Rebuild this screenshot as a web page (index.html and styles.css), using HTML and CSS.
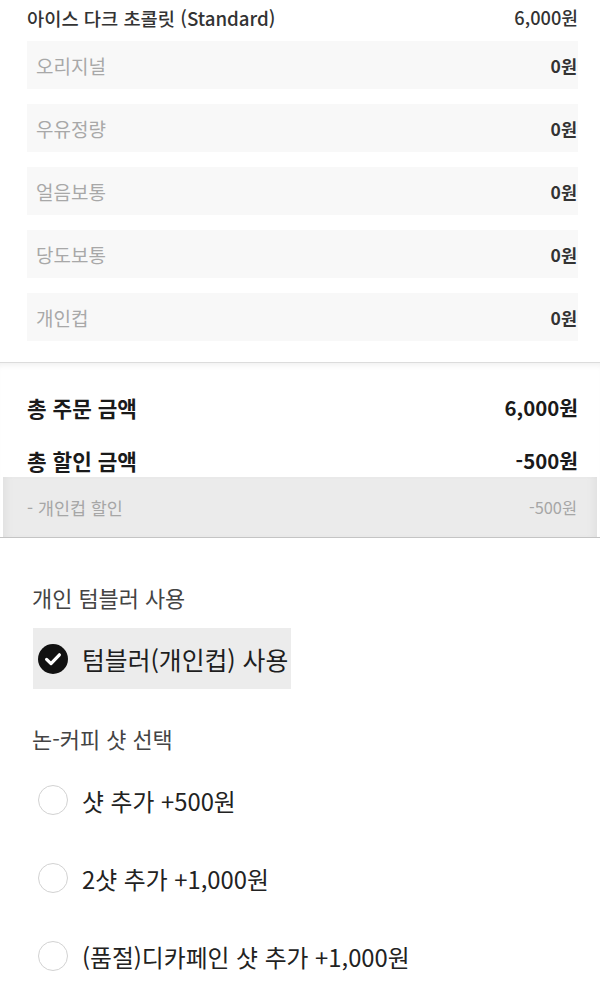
FILE: index.html
```html
<!DOCTYPE html>
<html lang="ko">
<head>
<meta charset="utf-8">
<link rel="stylesheet" href="styles.css">
</head>
<body>
<div class="items">
  <div class="item-head">
    <span>아이스 다크 초콜릿 (Standard)</span>
    <span class="head-price">6,000원</span>
  </div>
  <div class="opt"><span class="opt-name">오리지널</span><span class="opt-price">0원</span></div>
  <div class="opt"><span class="opt-name">우유정량</span><span class="opt-price">0원</span></div>
  <div class="opt"><span class="opt-name">얼음보통</span><span class="opt-price">0원</span></div>
  <div class="opt"><span class="opt-name">당도보통</span><span class="opt-price">0원</span></div>
  <div class="opt"><span class="opt-name">개인컵</span><span class="opt-price">0원</span></div>
</div>
<div class="totals">
  <div class="total-row"><span>총 주문 금액</span><span class="total-price">6,000원</span></div>
  <div class="total-row"><span>총 할인 금액</span><span class="total-price">-500원</span></div>
  <div class="discount"><span class="disc-name">- 개인컵 할인</span><span class="disc-price">-500원</span></div>
</div>
<div class="choices">
  <div class="group-title">개인 텀블러 사용</div>
  <div class="check-box">
    <svg class="check-icon" viewBox="0 0 30 30" width="30" height="30">
      <circle cx="15" cy="15" r="15" fill="#111"/>
      <path d="M8.6 15.4 L13 19.6 L21.4 10.8" fill="none" stroke="#fff" stroke-width="3.2" stroke-linecap="round" stroke-linejoin="round"/>
    </svg>
    <span class="check-label">텀블러(개인컵) 사용</span>
  </div>
  <div class="group-title second">논-커피 샷 선택</div>
  <div class="radio-row"><span class="radio"></span><span class="radio-label">샷 추가 +500원</span></div>
  <div class="radio-row"><span class="radio"></span><span class="radio-label">2샷 추가 +1,000원</span></div>
  <div class="radio-row"><span class="radio"></span><span class="radio-label">(품절)디카페인 샷 추가 +1,000원</span></div>
</div>
</body>
</html>
```

FILE: styles.css
```css
html, body {
  margin: 0;
  padding: 0;
  background: #fff;
}
body {
  width: 600px;
  height: 987px;
  overflow: hidden;
  font-family: "Noto Sans CJK KR", "Noto Sans", sans-serif;
  color: #222;
}
.items {
  padding: 0 22px 21px 27px;
}
.item-head {
  height: 34px;
  display: flex;
  justify-content: space-between;
  align-items: center;
  font-size: 18.7px;
  font-weight: 500;
  color: #333;
}
.head-price {
  font-size: 18.2px;
}
.opt {
  height: 48px;
  margin-top: 15px;
  background: #f8f8f8;
  display: flex;
  justify-content: space-between;
  align-items: center;
  padding: 0 1px 0 9px;
}
.item-head + .opt {
  margin-top: 7px;
}
.opt-name {
  color: #a8a8a8;
  font-size: 19px;
}
.opt-price {
  color: #333;
  font-weight: 700;
  font-size: 17.5px;
}
.totals {
  border-top: 1.5px solid #dcdcdc;
  box-shadow: inset 0 6px 6px -4px #efefef;
  padding-top: 27px;
  border-bottom: 1.5px solid #c4c4c4;
}
.total-row {
  height: 34px;
  display: flex;
  justify-content: space-between;
  align-items: center;
  padding: 0 22px 0 27px;
  font-size: 21.3px;
  font-weight: 700;
  color: #1a1a1a;
}
.total-price {
  font-size: 20.4px;
}
.total-row + .total-row {
  margin-top: 19px;
}
.discount {
  height: 60px;
  margin: 0 3px;
  background: #ebebeb;
  box-shadow: inset 8px 0 8px -6px #dedede, inset -8px 0 8px -6px #dedede;
  display: flex;
  justify-content: space-between;
  align-items: center;
  padding: 0 20px 0 24px;
  color: #a6a6a6;
}
.disc-name {
  font-size: 17.4px;
}
.disc-price {
  font-size: 16.4px;
}
.choices {
  padding-top: 45px;
}
.group-title {
  height: 30px;
  line-height: 30px;
  padding-left: 32px;
  font-size: 21.9px;
  color: #444;
}
.group-title.second {
  margin-top: 35px;
}
.check-box {
  margin: 15px 0 0 33px;
  width: 258px;
  height: 61px;
  background: #ececec;
  display: flex;
  align-items: center;
  box-sizing: border-box;
  padding-left: 5px;
}
.check-icon {
  display: block;
  flex: none;
}
.check-label {
  margin-left: 14px;
  font-size: 24.8px;
  color: #1e1e1e;
}
.radio-row {
  height: 78px;
  display: flex;
  align-items: center;
  padding-left: 38px;
}
.group-title.second + .radio-row {
  margin-top: 7px;
}
.radio {
  width: 30px;
  height: 30px;
  box-sizing: border-box;
  border: 1.5px solid #d2d2d2;
  border-radius: 50%;
  flex: none;
}
.radio-label {
  margin-left: 14px;
  font-size: 23.8px;
  color: #222;
}
```
